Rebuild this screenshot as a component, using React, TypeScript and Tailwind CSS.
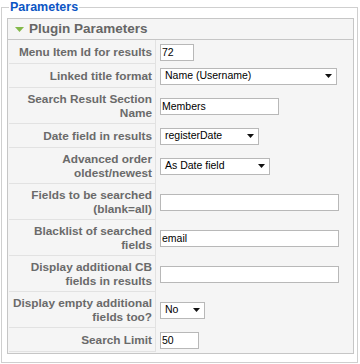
type Field =
  | { kind: 'input'; w: number; value: string }
  | { kind: 'select'; w: number; value: string }

type Row = { label: string[]; field: Field }

const ROWS: Row[] = [
  { label: ['Menu Item Id for results'], field: { kind: 'input', w: 34, value: '72' } },
  { label: ['Linked title format'], field: { kind: 'select', w: 177, value: 'Name (Username)' } },
  { label: ['Search Result Section', 'Name'], field: { kind: 'input', w: 119, value: 'Members' } },
  { label: ['Date field in results'], field: { kind: 'select', w: 99, value: 'registerDate' } },
  { label: ['Advanced order', 'oldest/newest'], field: { kind: 'select', w: 110, value: 'As Date field' } },
  { label: ['Fields to be searched', '(blank=all)'], field: { kind: 'input', w: 179, value: '' } },
  { label: ['Blacklist of searched', 'fields'], field: { kind: 'input', w: 179, value: 'email' } },
  { label: ['Display additional CB', 'fields in results'], field: { kind: 'input', w: 179, value: '' } },
  { label: ['Display empty additional', 'fields too?'], field: { kind: 'select', w: 45, value: 'No' } },
  { label: ['Search Limit'], field: { kind: 'input', w: 39, value: '50' } },
]

function FieldControl({ field }: { field: Field }) {
  if (field.kind === 'input') {
    return (
      <input
        readOnly
        defaultValue={field.value}
        style={{ width: field.w }}
        className="h-[17px] border border-[#b8b8b8] bg-white px-[1px] text-[10.5px] text-black outline-none"
      />
    )
  }
  return (
    <div
      style={{ width: field.w }}
      className="flex h-[17px] items-center justify-between border border-[#b8b8b8] bg-white pl-[4px] pr-[4px] text-[10.5px] text-black"
    >
      <span>{field.value}</span>
      <svg width="7" height="4" viewBox="0 0 7 4" className="shrink-0">
        <path d="M0 0h7L3.5 4z" fill="#111" />
      </svg>
    </div>
  )
}

export default function App() {
  return (
    <div className="h-[364px] w-[360px] bg-white pl-[1px] font-['Liberation_Sans',Arial,sans-serif]">
      <fieldset className="m-0 w-[357px] border border-[#cfcfcf] p-0">
        <legend className="ml-[7px] px-[1px] text-[12.5px] font-bold leading-[14px] text-[#0b55c4]">
          Parameters
        </legend>
        <div className="pb-[8px] pl-[5px] pr-[3px] pt-[4px]">
          <div className="w-[347px] border border-[#c6c6c6] bg-[#f5f5f5]">
            <div className="flex h-[21px] items-center gap-[5px] border-b border-[#c6c6c6] pl-[7px]">
              <svg width="9" height="5" viewBox="0 0 9 5">
                <path d="M0 0h9L4.5 5z" fill="#84b94a" />
              </svg>
              <span className="text-[13.5px] font-bold leading-none text-[#666]">Plugin Parameters</span>
            </div>
            <div className="pb-[1px] pl-[1px]">
              {ROWS.map((row) => (
                <div
                  key={row.label.join(' ')}
                  className={`flex ${row.label.length > 1 ? 'h-[36px]' : 'h-[24px]'}`}
                >
                  <div className="flex w-[147px] shrink-0 items-center justify-end border-b border-r border-[#e2e2e2] pr-[3px] text-right text-[11.8px] font-bold leading-[14px] text-[#6a6a6a]">
                    <div>
                      {row.label.map((l) => (
                        <div key={l}>{l}</div>
                      ))}
                    </div>
                  </div>
                  <div className="flex flex-1 items-center pl-[4px]">
                    <FieldControl field={row.field} />
                  </div>
                </div>
              ))}
            </div>
          </div>
        </div>
      </fieldset>
    </div>
  )
}
